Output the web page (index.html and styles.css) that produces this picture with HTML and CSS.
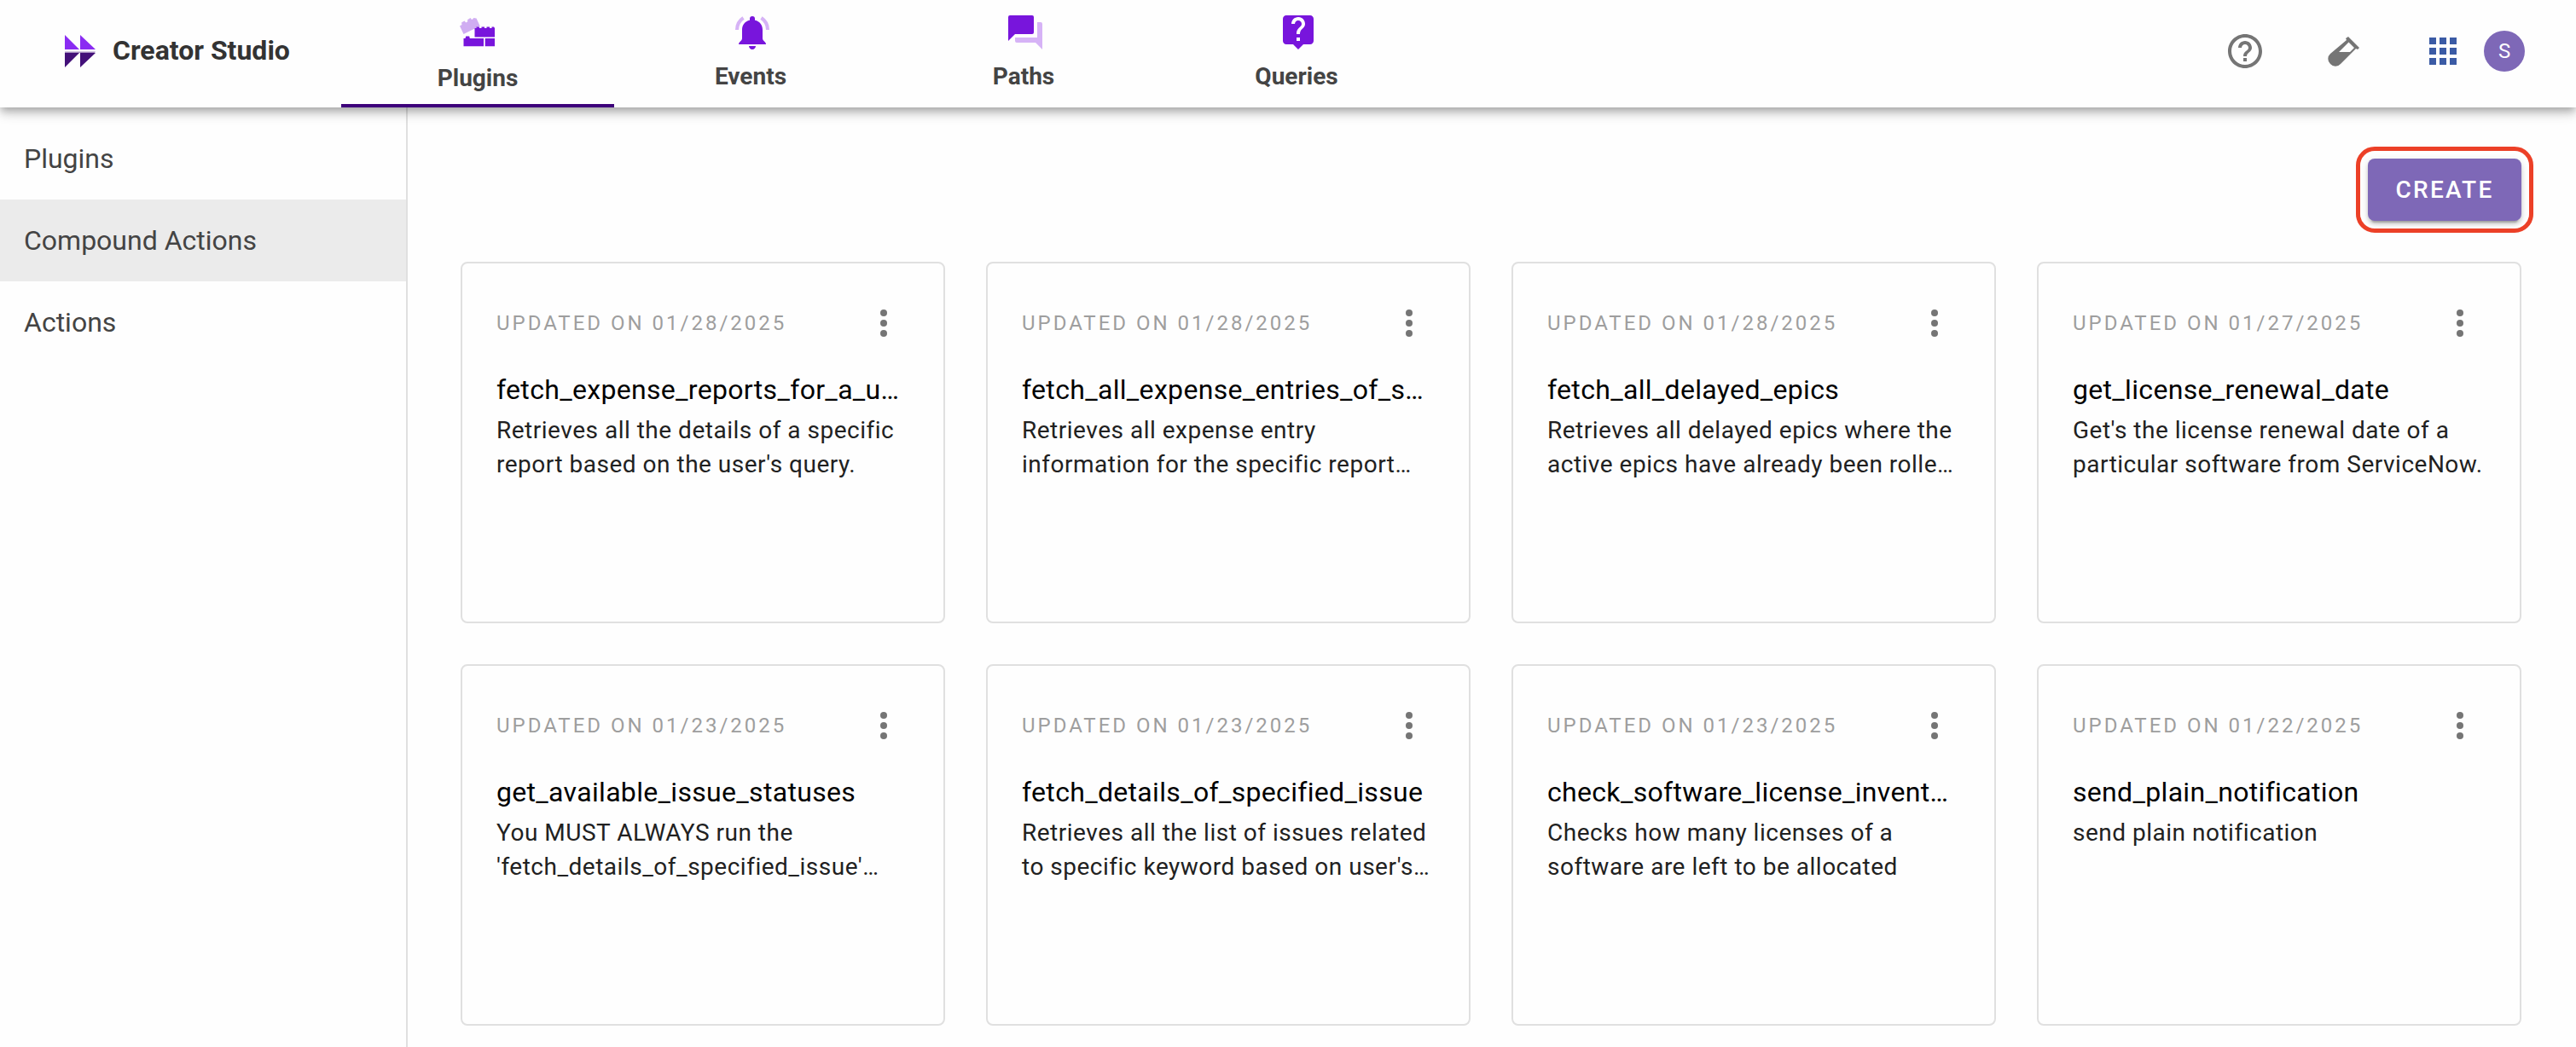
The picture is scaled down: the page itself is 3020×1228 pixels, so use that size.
FILE: index.html
```html
<!DOCTYPE html>
<html lang="en">
<head>
<meta charset="utf-8">
<title>Creator Studio</title>
<link rel="stylesheet" href="styles.css">
</head>
<body>
<header class="topbar">
  <a class="brand" href="#">
    <svg class="brand-mark" viewBox="0 0 36 38" aria-hidden="true">
      <path fill="#8a2cf2" d="M0 0 17 17H0zM18 0l18 17H18z"/>
      <path fill="#431079" d="M0 21h17L0 38zM18 21h18L18 38z"/>
      <path fill="#431079" opacity=".45" d="M0 19.500h36l-1 1.500H0z"/>
    </svg>
    <span class="brand-name">Creator Studio</span>
  </a>
  <nav class="tabs" aria-label="Sections">
    <a class="tab tab-active" href="#">
      <svg class="tab-icon" viewBox="0 0 48 48" aria-hidden="true">
        <path fill="#d0adf2" d="M3 16.500 5.500 15 5 12.500 8.500 10.500 10.200 12.500 12.300 11.300 12 9.200 15.500 7 17 9 18.800 8 19 7 22.500 7.500 26.700 16.500 7.500 26z"/>
        <path fill="#7815dc" d="M20.500 19h2v-1.500h3.500V19h2.500v-1.500H32V19h2.500v-1.500H38V19h2.500v-1.500H43l1 1.500v10.500H20.500zM7.500 31h2l.7-2.500h4l.6 2.500H31v9.300H7.500zM32.700 31H44v9.300H32.700z"/>
      </svg>
      <span>Plugins</span>
    </a>
    <a class="tab" href="#">
      <svg class="tab-icon" viewBox="-2 0 48 48" aria-hidden="true">
        <path fill="#7815dc" d="M36 31V21c0-6-3.300-10-9-11.300V8a3 3 0 0 0-6 0v1.700C15.300 11 12 15 12 21v10c0 3-4 4-4 7h32c0-3-4-4-4-7zM20 40h8c0 2.200-1.800 4-4 4s-4-1.800-4-4z"/>
        <path fill="none" stroke="#d6b3f6" stroke-width="4" d="M13.500 7C9 10 6 15 6 21M34.500 7C39 10 42 15 42 21"/>
      </svg>
      <span>Events</span>
    </a>
    <a class="tab" href="#">
      <svg class="tab-icon" viewBox="-2 0 48 48" aria-hidden="true">
        <path fill="#7815dc" d="M34 24V6a2 2 0 0 0-2-2H6a2 2 0 0 0-2 2v28l8-8h20a2 2 0 0 0 2-2z"/>
        <path fill="#d6b3f6" d="M42 12h-4v18H12v4a2 2 0 0 0 2 2h22l8 8V14a2 2 0 0 0-2-2z"/>
      </svg>
      <span>Paths</span>
    </a>
    <a class="tab" href="#">
      <svg class="tab-icon" viewBox="-1 0 24 24" aria-hidden="true">
        <path fill="#7815dc" d="M19 2H5c-1.110 0-2 .9-2 2v13c0 1.100.89 2 2 2h4l3 3 3-3h4c1.100 0 2-.9 2-2V4c0-1.100-.9-2-2-2zm-6 15h-2v-2h2v2zm2.070-7.750-.9.920C13.450 10.900 13 11.500 13 13h-2v-.5c0-1.100.45-2.100 1.170-2.830l1.240-1.260c.37-.36.590-.86.590-1.410 0-1.100-.9-2-2-2s-2 .9-2 2H8c0-2.210 1.790-4 4-4s4 1.790 4 4c0 .88-.36 1.680-.93 2.250z"/>
      </svg>
      <span>Queries</span>
    </a>
  </nav>
  <div class="tools">
    <button class="icon-button" type="button" aria-label="Help">
      <svg class="tool-icon" viewBox="0 0 24 24" aria-hidden="true"><path fill="#757575" d="M11 18h2v-2h-2v2zm1-16C6.480 2 2 6.480 2 12s4.480 10 10 10 10-4.480 10-10S17.520 2 12 2zm0 18c-4.410 0-8-3.590-8-8s3.590-8 8-8 8 3.590 8 8-3.590 8-8 8zm0-14c-2.210 0-4 1.790-4 4h2c0-1.100.9-2 2-2s2 .9 2 2c0 2-3 1.750-3 5h2c0-2.250 3-2.500 3-5 0-2.210-1.790-4-4-4z"/></svg>
    </button>
    <button class="icon-button" type="button" aria-label="Lab">
      <svg class="tool-icon" viewBox="0 0 48 48" aria-hidden="true"><path fill="#757575" fill-rule="evenodd" d="M29 7 42 20l-2 2-2-1-18 18a8 8 0 0 1-12 0 8 8 0 0 1 0-12L27 11l-1-2zM29.500 13.500 18 25h13l5-5z"/></svg>
    </button>
    <button class="icon-button" type="button" aria-label="Apps">
      <svg class="tool-icon" viewBox="0 0 24 24" aria-hidden="true"><path fill="#3b5ba5" d="M4 8h4V4H4zm6 12h4v-4h-4zm-6 0h4v-4H4zm0-6h4v-4H4zm6 0h4v-4h-4zm6-10v4h4V4zm-6 4h4V4h-4zm6 6h4v-4h-4zm0 6h4v-4h-4z"/></svg>
    </button>
    <button class="avatar" type="button" aria-label="Account">S</button>
  </div>
</header>
<div class="layout">
  <nav class="sidebar" aria-label="Plugins">
    <a class="side-link" href="#">Plugins</a>
    <a class="side-link side-link-active" href="#">Compound Actions</a>
    <a class="side-link" href="#">Actions</a>
  </nav>
  <main class="content">
    <div class="actions"><button class="create" type="button">CREATE</button></div>
    <div class="cards">
      <article class="card">
        <div class="card-head"><span class="updated">UPDATED ON 01/28/2025</span><button class="more" type="button" aria-label="More"><svg class="more-icon" viewBox="0 0 8 32"><circle cx="4" cy="4" r="4"/><circle cx="4" cy="16" r="4"/><circle cx="4" cy="28" r="4"/></svg></button></div>
        <h2 class="card-title">fetch_expense_reports_for_a_u…</h2>
        <p class="card-text">Retrieves all the details of a specific report based on the user's query.</p>
      </article>
      <article class="card">
        <div class="card-head"><span class="updated">UPDATED ON 01/28/2025</span><button class="more" type="button" aria-label="More"><svg class="more-icon" viewBox="0 0 8 32"><circle cx="4" cy="4" r="4"/><circle cx="4" cy="16" r="4"/><circle cx="4" cy="28" r="4"/></svg></button></div>
        <h2 class="card-title">fetch_all_expense_entries_of_s…</h2>
        <p class="card-text">Retrieves all expense entry<br>information for the specific report…</p>
      </article>
      <article class="card">
        <div class="card-head"><span class="updated">UPDATED ON 01/28/2025</span><button class="more" type="button" aria-label="More"><svg class="more-icon" viewBox="0 0 8 32"><circle cx="4" cy="4" r="4"/><circle cx="4" cy="16" r="4"/><circle cx="4" cy="28" r="4"/></svg></button></div>
        <h2 class="card-title">fetch_all_delayed_epics</h2>
        <p class="card-text">Retrieves all delayed epics where the active epics have already been rolle…</p>
      </article>
      <article class="card">
        <div class="card-head"><span class="updated">UPDATED ON 01/27/2025</span><button class="more" type="button" aria-label="More"><svg class="more-icon" viewBox="0 0 8 32"><circle cx="4" cy="4" r="4"/><circle cx="4" cy="16" r="4"/><circle cx="4" cy="28" r="4"/></svg></button></div>
        <h2 class="card-title">get_license_renewal_date</h2>
        <p class="card-text">Get's the license renewal date of a particular software from ServiceNow.</p>
      </article>
      <article class="card">
        <div class="card-head"><span class="updated">UPDATED ON 01/23/2025</span><button class="more" type="button" aria-label="More"><svg class="more-icon" viewBox="0 0 8 32"><circle cx="4" cy="4" r="4"/><circle cx="4" cy="16" r="4"/><circle cx="4" cy="28" r="4"/></svg></button></div>
        <h2 class="card-title">get_available_issue_statuses</h2>
        <p class="card-text">You MUST ALWAYS run the<br>'fetch_details_of_specified_issue'…</p>
      </article>
      <article class="card">
        <div class="card-head"><span class="updated">UPDATED ON 01/23/2025</span><button class="more" type="button" aria-label="More"><svg class="more-icon" viewBox="0 0 8 32"><circle cx="4" cy="4" r="4"/><circle cx="4" cy="16" r="4"/><circle cx="4" cy="28" r="4"/></svg></button></div>
        <h2 class="card-title">fetch_details_of_specified_issue</h2>
        <p class="card-text">Retrieves all the list of issues related to specific keyword based on user's…</p>
      </article>
      <article class="card">
        <div class="card-head"><span class="updated">UPDATED ON 01/23/2025</span><button class="more" type="button" aria-label="More"><svg class="more-icon" viewBox="0 0 8 32"><circle cx="4" cy="4" r="4"/><circle cx="4" cy="16" r="4"/><circle cx="4" cy="28" r="4"/></svg></button></div>
        <h2 class="card-title">check_software_license_invent…</h2>
        <p class="card-text">Checks how many licenses of a software are left to be allocated</p>
      </article>
      <article class="card">
        <div class="card-head"><span class="updated">UPDATED ON 01/22/2025</span><button class="more" type="button" aria-label="More"><svg class="more-icon" viewBox="0 0 8 32"><circle cx="4" cy="4" r="4"/><circle cx="4" cy="16" r="4"/><circle cx="4" cy="28" r="4"/></svg></button></div>
        <h2 class="card-title">send_plain_notification</h2>
        <p class="card-text">send plain notification</p>
      </article>
    </div>
  </main>
</div>
</body>
</html>
```
FILE: styles.css
```css
* { box-sizing: border-box; }
body {
  margin: 0;
  min-height: 100vh;
  display: flex;
  flex-direction: column;
  background: #fefefe;
  font-family: Roboto, "Liberation Sans", sans-serif;
  color: #212121;
}
a { color: inherit; text-decoration: none; }
button { border: 0; padding: 0; background: none; font: inherit; cursor: pointer; }
svg { display: block; }

.topbar {
  position: relative;
  z-index: 1;
  display: flex;
  height: 126px;
  background: #fefefe;
  box-shadow: 0 4px 8px -2px rgba(0, 0, 0, .2), 0 8px 10px rgba(0, 0, 0, .14), 0 2px 20px rgba(0, 0, 0, .12);
}
.brand {
  flex: none;
  width: 400px;
  padding: 0 0 6px 76px;
  display: flex;
  align-items: center;
  gap: 20px;
  font-size: 32px;
  font-weight: 700;
  color: #333;
}
.brand-mark { width: 36px; height: 38px; }
.brand-name { padding-bottom: 2px; }
.tabs { display: flex; }
.tab {
  width: 320px;
  padding-top: 14px;
  display: flex;
  flex-direction: column;
  align-items: center;
  gap: 10px;
  border-bottom: 4px solid transparent;
  font-size: 28px;
  line-height: 36px;
  font-weight: 700;
  color: #444;
}
.tab-active { gap: 12px; border-bottom-color: #3d007a; }
.tab-icon { width: 48px; height: 48px; }
.tools {
  margin-left: auto;
  padding: 0 60px 6px 0;
  display: flex;
  align-items: center;
}
.icon-button { display: flex; margin-right: 68px; }
.icon-button:nth-child(3) { margin-right: 24px; }
.tool-icon { width: 48px; height: 48px; }
.avatar {
  width: 48px;
  height: 48px;
  border-radius: 50%;
  background: #7e68b7;
  color: #fff;
  font-size: 24px;
}

.layout { flex: 1; display: flex; }
.sidebar {
  flex: none;
  width: 478px;
  padding-top: 12px;
  border-right: 2px solid #e0e0e0;
}
.side-link {
  display: block;
  padding: 0 28px;
  font-size: 32px;
  line-height: 96px;
  color: #444;
}
.side-link-active { background: #ebebeb; }

.content { flex: 1; min-width: 0; padding: 60px 64px 24px 62px; }
.actions { display: flex; justify-content: flex-end; margin-bottom: 48px; }
.create {
  width: 180px;
  height: 73px;
  border-radius: 8px;
  background: #7e68b7;
  color: #fff;
  font-size: 28px;
  font-weight: 500;
  letter-spacing: .08em;
  outline: 5px solid #ec4027;
  outline-offset: 9px;
  box-shadow: 0 6px 2px -4px rgba(0, 0, 0, .2), 0 4px 4px rgba(0, 0, 0, .14), 0 2px 10px rgba(0, 0, 0, .12);
}
.cards { display: grid; grid-template-columns: repeat(4, minmax(0, 1fr)); gap: 48px; }
.card {
  min-height: 424px;
  padding: 40px;
  border: 2px solid #e0e0e0;
  border-radius: 8px;
}
.card-head { display: flex; align-items: center; justify-content: space-between; height: 60px; }
.updated { font-size: 24px; letter-spacing: 3px; color: #9e9e9e; white-space: nowrap; }
.more { padding: 8px 26px; }
.more-icon { width: 8px; height: 32px; fill: #757575; }
.card-title {
  margin: 28px 0 0;
  font-size: 32px;
  line-height: 40px;
  font-weight: 400;
  letter-spacing: .01em;
  color: #000;
  white-space: nowrap;
}
.card-text { margin: 8px 0 0; font-size: 28px; line-height: 40px; letter-spacing: .018em; }
```
